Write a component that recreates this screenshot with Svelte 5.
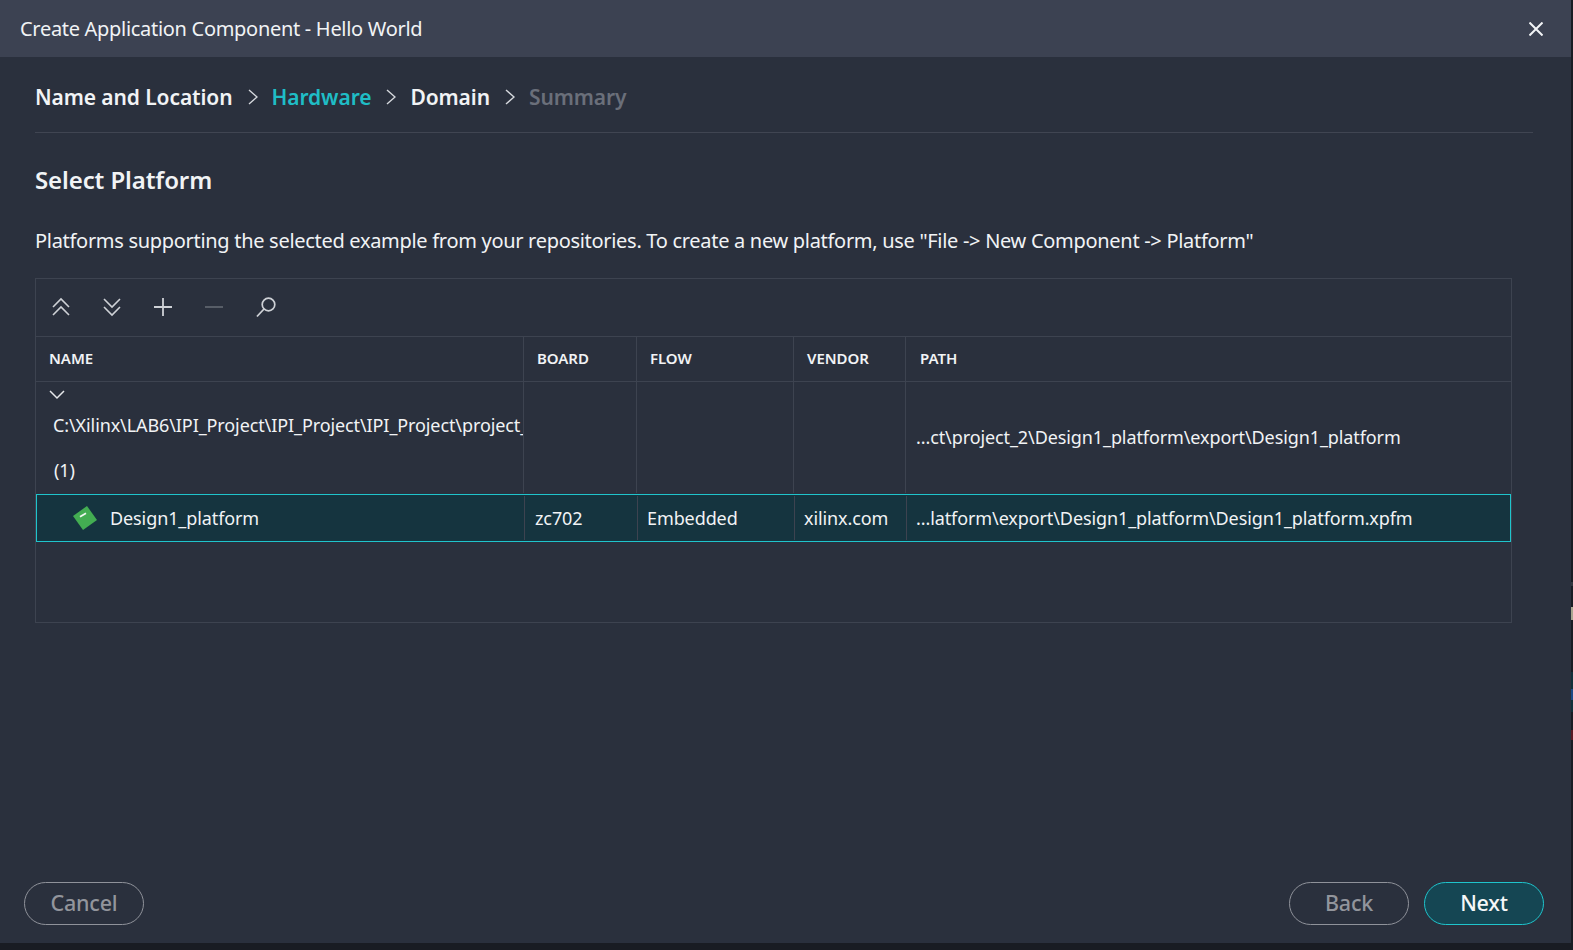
<script>
  const steps = [
    { label: "Name and Location", state: "done" },
    { label: "Hardware", state: "active" },
    { label: "Domain", state: "done" },
    { label: "Summary", state: "todo" }
  ];
  const columns = ["NAME", "BOARD", "FLOW", "VENDOR", "PATH"];
</script>

<div class="dialog">
  <header class="titlebar">
    <span>Create Application Component - Hello World</span>
    <svg class="close" width="14" height="14" viewBox="0 0 14 14"><path d="M.5.5l13 13M13.5.5l-13 13" stroke="#f2f4f6" stroke-width="2" fill="none" /></svg>
  </header>

  <div class="content">
    <nav class="crumbs">
      {#each steps as step, i}
        {#if i > 0}
          <svg class="sep" width="10" height="16" viewBox="0 0 10 16"><path d="M1 1l8 7-8 7" stroke="#d5d8dd" stroke-width="1.4" fill="none" /></svg>
        {/if}
        <span class={step.state}>{step.label}</span>
      {/each}
    </nav>

    <h2>Select Platform</h2>
    <p>Platforms supporting the selected example from your repositories. To create a new platform, use "File -&gt; New Component -&gt; Platform"</p>

    <div class="table">
      <div class="toolbar">
        <svg width="20" height="20" viewBox="0 0 20 20"><path d="M2 10l8-8 8 8M2 18l8-8 8 8" stroke="#ced1d6" stroke-width="1.6" fill="none" /></svg>
        <svg width="20" height="20" viewBox="0 0 20 20"><path d="M2 2l8 8 8-8M2 10l8 8 8-8" stroke="#ced1d6" stroke-width="1.6" fill="none" /></svg>
        <svg width="20" height="20" viewBox="0 0 20 20"><path d="M10 1v18M1 10h18" stroke="#ced1d6" stroke-width="1.8" fill="none" /></svg>
        <svg width="20" height="20" viewBox="0 0 20 20"><path d="M1 10h18" stroke="#5d626d" stroke-width="1.8" fill="none" /></svg>
        <svg width="22" height="22" viewBox="0 0 22 22"><circle cx="13.5" cy="8.5" r="6.3" stroke="#ced1d6" stroke-width="1.7" fill="none" /><path d="M9 13L2 20.5" stroke="#ced1d6" stroke-width="1.8" fill="none" /></svg>
      </div>

      <div class="row head">
        {#each columns as col}
          <div class="cell">{col}</div>
        {/each}
      </div>

      <div class="row group">
        <div class="cell name">
          <svg class="chevron" width="16" height="10" viewBox="0 0 16 10"><path d="M1 1l7 7 7-7" stroke="#e6e8eb" stroke-width="1.5" fill="none" /></svg>
          <div class="path">C:\Xilinx\LAB6\IPI_Project\IPI_Project\IPI_Project\project_2\Design1_platform</div>
          <div class="count">(1)</div>
        </div>
        <div class="cell"></div>
        <div class="cell"></div>
        <div class="cell"></div>
        <div class="cell wide">...ct\project_2\Design1_platform\export\Design1_platform</div>
      </div>

      <div class="row selected">
        <div class="cell item">
          <svg width="26" height="26" viewBox="0 0 26 26">
            <path d="M15 1L25 15 11 25 1 11z" fill="#43ad52" />
            <path d="M8 11.7l6-3.4" stroke="#eef6ef" stroke-width="1.8" fill="none" />
          </svg>
          <span>Design1_platform</span>
        </div>
        <div class="cell board">zc702</div>
        <div class="cell">Embedded</div>
        <div class="cell">xilinx.com</div>
        <div class="cell">...latform\export\Design1_platform\Design1_platform.xpfm</div>
      </div>
    </div>
  </div>

  <footer class="actions">
    <button class="pill">Cancel</button>
    <div class="right">
      <button class="pill">Back</button>
      <button class="pill primary">Next</button>
    </div>
  </footer>
</div>
<div class="edge"></div>

<style>
  :global(body) {
    background: #191c23;
    font-family: "Noto Sans", "Open Sans", sans-serif;
  }
  .dialog {
    width: 1571px;
    height: 943px;
    background: #2a303d;
    color: #f1f3f5;
    display: flex;
    flex-direction: column;
  }
  /* sliver of the window behind the dialog */
  .edge {
    position: absolute;
    left: 1571px;
    top: 580px;
    width: 2px;
    height: 165px;
    background: linear-gradient(
      #191c23 0 2px, #32363e 2px 6px, #191c23 6px 27px, #a9a58f 27px 40px, #191c23 40px 92px,
      #12303a 92px 109px, #1d4a86 109px 120px, #12303a 120px 132px, #191c23 132px 150px,
      #5a1a24 150px 160px, #191c23 160px
    );
  }
  .titlebar {
    height: 57px;
    flex: none;
    background: #3c4252;
    display: flex;
    align-items: center;
    justify-content: space-between;
    padding: 0 28px 0 20px;
    font-size: 20px;
    letter-spacing: -0.3px;
  }
  .content {
    padding: 0 38px 0 35px;
    flex: 1;
  }
  .crumbs {
    height: 75px;
    box-sizing: content-box;
    display: flex;
    align-items: center;
    border-bottom: 1px solid #404552;
    font-size: 21px;
    line-height: 28px;
    font-weight: 600;
    letter-spacing: -0.1px;
  }
  .crumbs span {
    padding-top: 5px;
  }
  .crumbs .sep {
    margin: 5px 14px 0 15px;
  }
  .crumbs .active {
    color: #1fbdc6;
  }
  .crumbs .todo {
    color: #6a6f7a;
  }
  h2 {
    margin: 30px 0 0;
    font-size: 24px;
    line-height: 34px;
    font-weight: 600;
    letter-spacing: -0.1px;
  }
  p {
    margin: 30px 0 0;
    font-size: 20px;
    line-height: 28px;
    letter-spacing: -0.3px;
  }
  .table {
    width: 1477px;
    height: 345px;
    box-sizing: border-box;
    margin-top: 23px;
    border: 1px solid #3d4350;
  }
  .toolbar {
    height: 58px;
    box-sizing: border-box;
    border-bottom: 1px solid #3d4350;
    display: flex;
    align-items: center;
    gap: 31px;
    padding: 0 0 2px 15px;
  }
  .row {
    display: grid;
    grid-template-columns: 488px 113px 157px 112px 1fr;
  }
  .cell {
    border-right: 1px solid #3d4350;
    box-sizing: border-box;
    min-width: 0;
    display: flex;
    align-items: center;
  }
  .cell:last-child {
    border-right: none;
  }
  .head {
    height: 44px;
    border-bottom: 1px solid #3d4350;
    font-size: 15px;
    font-weight: 600;
    letter-spacing: -0.05px;
  }
  .head .cell {
    padding: 0 0 2px 13px;
  }
  .head .cell:last-child {
    padding-left: 14px;
  }
  .group {
    height: 111px;
    font-size: 18px;
    letter-spacing: -0.1px;
  }
  .group .name {
    display: block;
    overflow: hidden;
    white-space: nowrap;
    padding-left: 17px;
    position: relative;
  }
  .chevron {
    position: absolute;
    left: 13px;
    top: 8px;
  }
  .path {
    margin-top: 29px;
    line-height: 28px;
    overflow: hidden;
  }
  .count {
    margin: 17px 0 0 1px;
    line-height: 28px;
  }
  .wide {
    padding: 0 0 2px 10px;
  }
  .selected {
    height: 48px;
    margin-top: 1px;
    background: #15343f;
    outline: 1px solid #1fc4cc;
    outline-offset: -1px;
    font-size: 18px;
    letter-spacing: -0.1px;
    grid-template-columns: 489px 113px 157px 112px 1fr;
  }
  .selected .cell {
    padding-left: 9px;
    margin: 2px 0;
  }
  .selected .board {
    padding-left: 10px;
  }
  .selected .item {
    padding-left: 36px;
    gap: 12px;
  }
  .actions {
    display: flex;
    justify-content: space-between;
    padding: 0 27px 18px 24px;
  }
  .right {
    display: flex;
    gap: 15px;
  }
  .pill {
    width: 120px;
    height: 43px;
    border-radius: 22px;
    border: 1px solid #8f929a;
    background: transparent;
    color: #92959c;
    font: 500 21.5px "Noto Sans", sans-serif;
    letter-spacing: -0.2px;
    padding: 0 0 2px;
  }
  .primary {
    background: #154653;
    border-color: #1fc4cc;
    color: #f5f7f8;
  }
</style>
